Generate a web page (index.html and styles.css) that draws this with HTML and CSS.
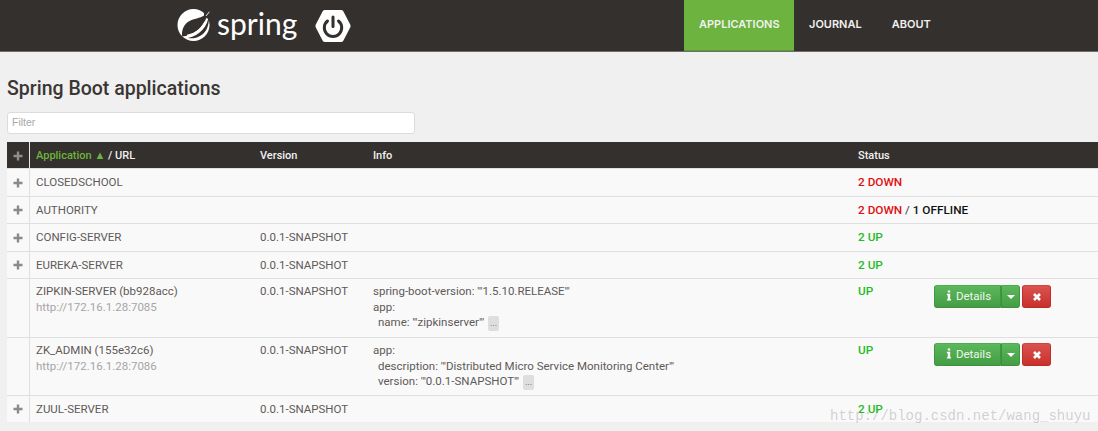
FILE: index.html
```html
<!DOCTYPE html>
<html lang="en">
<head>
<meta charset="utf-8">
<title>Spring Boot Admin</title>
<link rel="stylesheet" href="styles.css">
</head>
<body>
<svg class="defs" width="0" height="0" aria-hidden="true">
  <symbol id="plus" viewBox="0 0 10 10"><path d="M3.800 0.500h2.400v3.300h3.300v2.400H6.200v3.300H3.800V6.200H0.500V3.800h3.300z"/></symbol>
</svg>
<header class="navbar">
  <div class="brand">
    <svg class="leaf" viewBox="0 0 36 34" width="36" height="34" aria-hidden="true">
      <circle cx="17.500" cy="17" r="16" fill="#fff"/>
      <path d="M28 2.500L33.500 3.500L33.500 12L28 8Z" fill="#34302d"/>
      <path d="M32.500 4.500C27.500 9 22 10 17 11.500C10 13.500 5.500 19 6 28.500C16 28 27.500 21 32.500 4.500Z" fill="#34302d"/>
      <path d="M32.800 7C32 18 24 27.500 12 30C19 31.500 28.500 28 31.500 19C33 14.500 33.300 10.500 32.800 7Z" fill="#34302d"/>
      <path d="M33.300 3.800L30 8" stroke="#fff" stroke-width="0.900" fill="none"/>
      <path d="M11 27.500C19 26 25.500 22 29 14" stroke="#fff" stroke-width="1.300" fill="none"/>
    </svg>
    <span class="wordmark">spring</span>
    <svg class="boot" viewBox="0 0 36 34" width="36" height="34" aria-hidden="true">
      <path d="M10 1H26Q27.500 1 28.300 2.300L35.200 15.500Q36 17 35.200 18.500L28.300 31.700Q27.500 33 26 33H10Q8.500 33 7.700 31.700L0.800 18.500Q0 17 0.800 15.500L7.700 2.300Q8.500 1 10 1Z" fill="#fff"/>
      <path d="M12.500 12A8.700 8.700 0 1 0 23.500 12" fill="none" stroke="#34302d" stroke-width="3" stroke-linecap="round"/>
      <path d="M18 8V17.500" fill="none" stroke="#34302d" stroke-width="3" stroke-linecap="round"/>
    </svg>
  </div>
  <nav class="nav">
    <a class="nav-item active">APPLICATIONS</a>
    <a class="nav-item">JOURNAL</a>
    <a class="nav-item">ABOUT</a>
  </nav>
</header>
<main class="content">
  <h2 class="title">Spring Boot applications</h2>
  <input class="filter" type="text" placeholder="Filter">
  <table class="apps">
    <colgroup>
      <col class="c-toggle"><col class="c-app"><col class="c-version"><col class="c-info"><col class="c-status"><col class="c-actions">
    </colgroup>
    <thead>
      <tr>
        <th class="toggle"><svg class="plus" aria-hidden="true"><use href="#plus"/></svg></th>
        <th><span class="sorted">Application <span class="arrow">▲</span></span> / URL</th>
        <th>Version</th>
        <th>Info</th>
        <th colspan="2">Status</th>
      </tr>
    </thead>
    <tbody>
      <tr class="row-28">
        <td class="toggle"><svg class="plus" aria-hidden="true"><use href="#plus"/></svg></td>
        <td>CLOSEDSCHOOL</td><td></td><td></td>
        <td colspan="2"><b class="down">2 DOWN</b></td>
      </tr>
      <tr class="row-27">
        <td class="toggle"><svg class="plus" aria-hidden="true"><use href="#plus"/></svg></td>
        <td>AUTHORITY</td><td></td><td></td>
        <td colspan="2"><b class="down">2 DOWN</b> <span class="sep">/</span> <b class="offline">1 OFFLINE</b></td>
      </tr>
      <tr class="row-28">
        <td class="toggle"><svg class="plus" aria-hidden="true"><use href="#plus"/></svg></td>
        <td>CONFIG-SERVER</td><td>0.0.1-SNAPSHOT</td><td></td>
        <td colspan="2"><b class="up">2 UP</b></td>
      </tr>
      <tr class="row-27">
        <td class="toggle"><svg class="plus" aria-hidden="true"><use href="#plus"/></svg></td>
        <td>EUREKA-SERVER</td><td>0.0.1-SNAPSHOT</td><td></td>
        <td colspan="2"><b class="up">2 UP</b></td>
      </tr>
      <tr class="tall row-59">
        <td class="toggle"></td>
        <td>ZIPKIN-SERVER (bb928acc)<br><span class="url">http://172.16.1.28:7085</span></td>
        <td>0.0.1-SNAPSHOT</td>
        <td class="info">spring-boot-version: '"1.5.10.RELEASE"'<br>app:<br><span class="indent">name: '"zipkinserver"' <span class="more">...</span></span></td>
        <td><b class="up">UP</b></td>
        <td class="actions">
          <div class="btn-row">
            <div class="btn-group">
              <button class="btn green main"><svg class="i-info" viewBox="0 0 6 12" aria-hidden="true"><path d="M1.700 0.500h2.600v2.300H1.700zM0.700 4.200h3.600v5.800h1v1.500H0.700V10h1V5.700h-1z"/></svg> Details</button>
              <button class="btn green caret-btn"><span class="caret"></span></button>
            </div>
            <button class="btn red"><svg class="i-x" viewBox="0 0 10 10" aria-hidden="true"><path d="M2 2L8 8M8 2L2 8"/></svg></button>
          </div>
        </td>
      </tr>
      <tr class="tall row-58">
        <td class="toggle"></td>
        <td>ZK_ADMIN (155e32c6)<br><span class="url">http://172.16.1.28:7086</span></td>
        <td>0.0.1-SNAPSHOT</td>
        <td class="info">app:<br><span class="indent">description: '"Distributed Micro Service Monitoring Center"'</span><br><span class="indent">version: '"0.0.1-SNAPSHOT"' <span class="more">...</span></span></td>
        <td><b class="up">UP</b></td>
        <td class="actions">
          <div class="btn-row">
            <div class="btn-group">
              <button class="btn green main"><svg class="i-info" viewBox="0 0 6 12" aria-hidden="true"><path d="M1.700 0.500h2.600v2.300H1.700zM0.700 4.200h3.600v5.800h1v1.500H0.700V10h1V5.700h-1z"/></svg> Details</button>
              <button class="btn green caret-btn"><span class="caret"></span></button>
            </div>
            <button class="btn red"><svg class="i-x" viewBox="0 0 10 10" aria-hidden="true"><path d="M2 2L8 8M8 2L2 8"/></svg></button>
          </div>
        </td>
      </tr>
      <tr class="row-27">
        <td class="toggle"><svg class="plus" aria-hidden="true"><use href="#plus"/></svg></td>
        <td>ZUUL-SERVER</td><td>0.0.1-SNAPSHOT</td><td></td>
        <td colspan="2"><b class="up">2 UP</b></td>
      </tr>
    </tbody>
  </table>
</main>
<div class="watermark">http://blog.csdn.net/wang_shuyu</div>
</body>
</html>
```
FILE: styles.css
```css
* { box-sizing: border-box; }
html, body { margin: 0; height: 431px; overflow: hidden; }
body {
  position: relative;
  background: #f0f0f0;
  color: #5f5a58;
  font-family: "Roboto", "Noto Sans", sans-serif;
  font-size: 11.500px;
}
.defs { position: absolute; }

.navbar {
  display: flex;
  height: 52px;
  background: #34302d;
  border-bottom: 1px solid #6f6c6a;
}
.brand {
  display: flex;
  align-items: center;
  width: 684px;
  padding-left: 176px;
}
.leaf { flex: none; margin-top: -1px; }
.wordmark {
  flex: none;
  width: 98px;
  margin: -5px 0 0 5px;
  color: #fff;
  font-family: "Lato", sans-serif;
  font-size: 30px;
  line-height: 40px;
}
.boot { flex: none; margin-top: 1px; }
.nav { display: flex; }
.nav-item {
  padding: 0 15px;
  color: #f1f1f1;
  font-family: "Inter", sans-serif;
  font-size: 11px;
  font-weight: 600;
  line-height: 49px;
}
.nav-item.active { width: 110px; height: 51px; background: #6db33f; border-bottom: 1px solid #5c9a34; }

.content { padding: 0 0 0 7px; }
.title {
  margin: 24px 0 0;
  color: #3a3633;
  font-size: 19.500px;
  font-weight: 500;
  line-height: 26px;
}
.filter {
  display: block;
  width: 408px;
  height: 22px;
  margin-top: 10px;
  padding: 0 4px 2px;
  border: 1px solid #dcdcdc;
  border-radius: 3px;
  background: #fff;
  font-family: "Liberation Sans", sans-serif;
  font-size: 10.500px;
}
.filter::placeholder { color: #a8a8a8; opacity: 1; }

.apps {
  width: 1091px;
  margin-top: 8px;
  border-collapse: separate;
  border-spacing: 0;
  table-layout: fixed;
}
.c-toggle { width: 23px; }
.c-app { width: 224px; }
.c-version { width: 113px; }
.c-info { width: 485px; }
.c-status { width: 76px; }
.c-actions { width: 170px; }

.apps th {
  height: 26px;
  padding: 0 6px;
  background: #34302d;
  color: #f1f1f1;
  font-size: 11px;
  font-weight: 500;
  text-align: left;
}
.apps th.toggle { padding: 0; border-right: 1px solid #e8e8e8; }
.apps td {
  padding: 0 6px;
  background: #f9f9f9;
  border-top: 1px solid #dfdfdf;
  line-height: 15px;
}
.apps td.toggle { padding: 0; border-right: 1px solid #dfdfdf; }
.apps .toggle { text-align: center; }
.row-27 td { height: 27px; }
.row-28 td { height: 28px; }
.row-58 td { height: 58px; }
.row-59 td { height: 59px; }
.apps .tall td { padding-top: 5px; line-height: 15.500px; vertical-align: top; }
.plus { display: inline-block; width: 10px; height: 10px; fill: #8a8a8a; vertical-align: middle; }
th .plus { fill: #8f8d8b; }

.sorted { color: #6db33f; }
.arrow { font-size: 11px; }
.url { color: #a6a6a6; }
.indent { padding-left: 5px; }
.more {
  display: inline-block;
  width: 11px;
  height: 15px;
  margin-left: 1px;
  border-radius: 2px;
  background: #dedede;
  font-size: 9px;
  line-height: 15px;
  text-align: center;
}

.up, .down, .offline { font-size: 11.800px; font-weight: 500; }
.up { color: #25bb25; }
.down { color: #e01010; }
.offline { color: #111; }
.sep { color: #333; }

.apps .tall td.actions { padding: 6px 0 0 6px; }
.apps .row-58 td.actions { padding-top: 5px; }
.btn-row { display: flex; gap: 2px; }
.btn-group { display: flex; }
.btn {
  display: flex;
  align-items: center;
  justify-content: center;
  height: 23px;
  padding: 0;
  border: 1px solid;
  border-radius: 3px;
  color: #fff;
  font-family: inherit;
  font-size: 11.500px;
}
.green {
  background: linear-gradient(#5cb85c, #449d44);
  border-color: #4cae4c #419641 #3e8f3e;
  color: #eef7ee;
}
.main { width: 67px; gap: 4px; padding: 0 0 2px 2px; border-radius: 3px 0 0 3px; }
.caret-btn { width: 19px; border-radius: 0 3px 3px 0; border-left-color: #3e8f3e; }
.caret { width: 0; height: 0; border: 4px solid transparent; border-top-color: #fff; border-bottom: 0; }
.red {
  width: 29px;
  background: linear-gradient(#d9534f, #c9302c);
  border-color: #d0443f #c12e2a #b92c28;
}
.i-info { width: 6px; height: 11px; fill: #fff; }
.i-x { width: 10px; height: 10px; fill: none; stroke: #fff; stroke-width: 2.600; }

.watermark {
  position: absolute;
  left: 830px;
  top: 407px;
  color: rgba(120, 120, 120, 0.32);
  font-family: "Liberation Mono", monospace;
  font-size: 14px;
  line-height: 18px;
  pointer-events: none;
}
```
